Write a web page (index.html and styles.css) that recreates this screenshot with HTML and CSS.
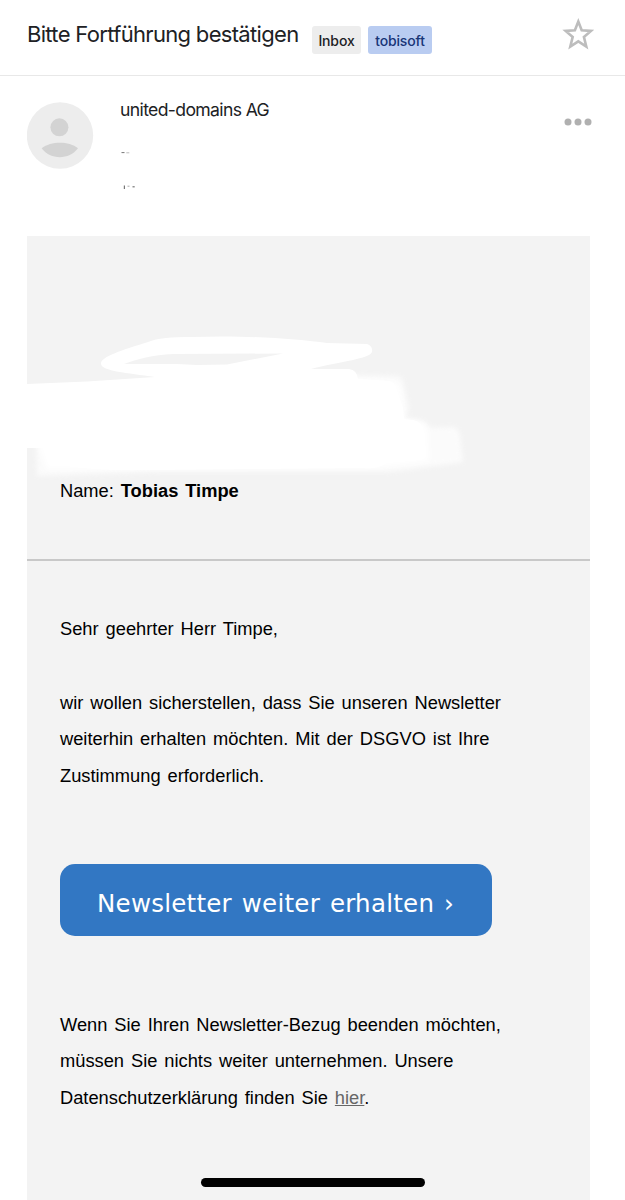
FILE: index.html
```html
<!DOCTYPE html>
<html lang="de">
<head>
    <meta charset="UTF-8">
    <title>Bitte Fortführung bestätigen</title>
    <link rel="stylesheet" href="styles.css">
</head>
<body>
    <header class="subject-bar">
        <h1 class="subject">Bitte Fortführung bestätigen</h1>
        <div class="labels">
            <span class="label label-inbox">Inbox</span>
            <span class="label label-tobisoft">tobisoft</span>
        </div>
        <svg class="star" width="34" height="34" viewBox="0 0 34 34">
            <path d="M17.300 4.500 L20.700 13.200 L30 13.900 L22.900 19.900 L25.300 29.500 L17.300 24.300 L9.300 29.500 L11.700 19.900 L4.600 13.900 L13.900 13.200 Z" fill="none" stroke="#bdbdbd" stroke-width="2.6"/>
        </svg>
    </header>

    <div class="sender">
        <svg class="avatar" width="67" height="67" viewBox="0 0 67 67">
            <circle cx="33" cy="33.5" r="33.2" fill="#ededed"/>
            <circle cx="32.4" cy="25.3" r="9" fill="#d3d3d3"/>
            <path d="M14.600 46.300 C24 39 42 39 51 46.300 C42 58.200 23.500 58.200 14.600 46.300 Z" fill="#d3d3d3"/>
        </svg>
        <div class="sender-info">
            <div class="sender-name">united-domains AG</div>
            <svg class="remains" width="30" height="50" viewBox="0 0 30 50">
                <path d="M1.5 10.6h3" stroke="#777" stroke-width="1"/>
                <path d="M6.3 10.8h3" stroke="#bbb" stroke-width="1"/>
                <path d="M4.4 43.5v3.5" stroke="#777" stroke-width="1.2"/>
                <path d="M7.5 44.2h2" stroke="#aaa" stroke-width="1"/>
                <path d="M12.5 44.8h2.2" stroke="#777" stroke-width="1.2"/>
            </svg>
        </div>
        <svg class="more" width="28" height="8" viewBox="0 0 28 8">
            <circle cx="4" cy="4" r="3.5"/>
            <circle cx="14" cy="4" r="3.5"/>
            <circle cx="24" cy="4" r="3.5"/>
        </svg>
    </div>

    <main class="mail">
        <section class="mail-head">
            <!-- white brush strokes over the customer data -->
            <svg class="brush" width="450" height="150" viewBox="0 0 450 150">
                <defs>
                    <filter id="soft" x="-10%" y="-20%" width="120%" height="140%">
                        <feGaussianBlur stdDeviation="2.5"/>
                    </filter>
                </defs>
                <path d="M8 60 L330 45 L370 46 Q376 47 377 56 L382 79 L378 88 L392 90 Q402 91 403 98 L426 97 Q432 98 433 106 L436 132 Q410 136 360 142 L130 142 L10 146 Z" fill="#fff" opacity="0.7" filter="url(#soft)"/>
                <path d="M20 80 L340 50 L366 52 Q372 53 373 60 L377 90 L388 91 Q398 92 401 103 L402 131 L350 137 L20 139 L12 116 Z" fill="#fff" filter="url(#soft)"/>
                <path d="M0 54 L60 51.5 L128 47 C100 43 75 41 74 34 C73 27 95 20 121 12 C130 8 145 7 165 7 C220 5 270 9 300 13 L340 14 Q346 16 345 22 C342 29 315 31 284 39 L322 39 Q330 40 331 49 L362 51 Q368 52 370 60 L376 78 L377 89 L386 90 Q396 92 397 103 L395 130 L360 133 Q350 140 335 138 L120 140 Q60 141 30 134 L17 118 L0 118 Z" fill="#fff"/>
                <path d="M97 34 C110 29 126 25 146 24 L256 23.500 L200 34.500 L170 35 L150 34 Z" fill="#f3f3f3"/>
            </svg>
            <p>Name: <b>Tobias Timpe</b></p>
        </section>
        <section class="mail-body">
            <p>Sehr geehrter Herr Timpe,</p>
            <p class="gap">wir wollen sicherstellen, dass Sie unseren Newsletter<br>
            weiterhin erhalten möchten. Mit der DSGVO ist Ihre<br>
            Zustimmung erforderlich.</p>
            <a class="button" href="#">Newsletter weiter erhalten ›</a>
            <p>Wenn Sie Ihren Newsletter-Bezug beenden möchten,<br>
            müssen Sie nichts weiter unternehmen. Unsere<br>
            Datenschutzerklärung finden Sie <a class="link" href="#">hier</a>.</p>
        </section>
    </main>
    <div class="home-indicator"></div>
</body>
</html>
```

FILE: styles.css
```css
* {
    box-sizing: border-box;
}
body {
    margin: 0;
    height: 1200px;
    overflow: hidden;
    background-color: #fff;
    font-family: Inter, "Liberation Sans", sans-serif;
    color: #202124;
}
.subject-bar {
    display: flex;
    align-items: flex-start;
    height: 76px;
    padding: 0 30px 0 27px;
    border-bottom: 1px solid #e8e8e8;
}
.subject {
    width: 285px;
    margin: 0;
    padding-top: 20px;
    font-size: 22px;
    font-weight: 400;
    line-height: 28px;
    letter-spacing: -0.68px;
    white-space: nowrap;
}
.labels {
    display: flex;
    gap: 7px;
    padding-top: 26px;
}
.label {
    height: 28px;
    border-radius: 3px;
    font-size: 14px;
    font-weight: 500;
    line-height: 29px;
    text-align: center;
    letter-spacing: -0.15px;
}
.label-inbox {
    width: 49px;
    background-color: #ededed;
}
.label-tobisoft {
    width: 64px;
    background-color: #b9ccf1;
    color: #183577;
}
.star {
    margin: 17px 0 0 auto;
}
.sender {
    display: flex;
    align-items: flex-start;
    height: 160px;
    padding: 26px 33px 0 27px;
}
.sender-info {
    display: flex;
    flex-direction: column;
    margin-left: 26px;
}
.sender-name {
    height: 40px;
    font-size: 17.6px;
    line-height: 16px;
    letter-spacing: -0.64px;
}
.more {
    margin: 16px 0 0 auto;
    fill: #b0b0b0;
}
.mail {
    width: 563px;
    height: 964px;
    margin-left: 27px;
    background-color: #f3f3f3;
    font-family: "Liberation Sans", Arial, sans-serif;
    font-size: 18.3px;
    line-height: 36.6px;
    word-spacing: 1.85px;
    color: #000;
}
.mail p {
    margin: 0;
    white-space: nowrap;
}
.mail-head {
    position: relative;
    height: 325px;
    padding: 237px 33px 0;
    border-bottom: 2px solid #c8c8c8;
}
.brush {
    position: absolute;
    left: 0;
    top: 94px;
}
.mail-head p {
    position: relative;
}
.mail-body {
    padding: 50px 33px 0;
}
.mail-body .gap {
    margin-top: 37.2px;
}
.button {
    display: block;
    width: 432px;
    height: 72px;
    margin: 69.4px 0 70.6px;
    padding-left: 37px;
    border-radius: 15px;
    background-color: #3277c3;
    font-family: "DejaVu Sans", Verdana, sans-serif;
    font-size: 24.5px;
    line-height: 80px;
    letter-spacing: 0.25px;
    white-space: nowrap;
    text-decoration: none;
    color: #fff;
}
.link {
    color: #666;
}
.home-indicator {
    position: absolute;
    left: 201px;
    top: 1178px;
    width: 224px;
    height: 9px;
    border-radius: 5px;
    background-color: #000;
}
```
